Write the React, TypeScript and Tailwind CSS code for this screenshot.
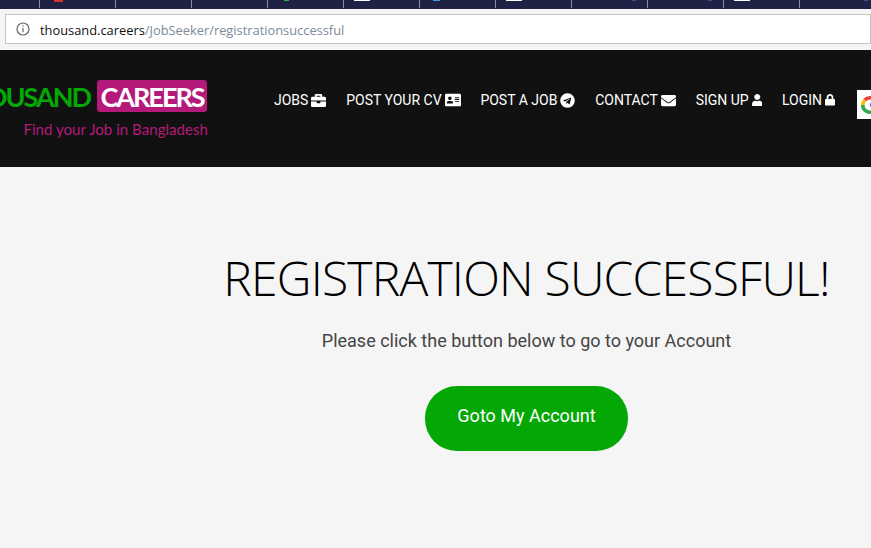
import { FaAddressCard, FaBriefcase, FaEnvelope, FaLock, FaTelegram, FaUser } from 'react-icons/fa';

const tabs = [
  'ml-[14px] w-[9px] h-[2px] bg-[#d9362b]',
  '',
  '',
  'ml-[16px] w-[5px] h-[1px] bg-[#25b34b]',
  'ml-[10px] w-[16px] h-[1px] bg-white',
  'ml-[13px] w-[7px] h-[1px] bg-[#2a9fd8]',
  'ml-[10px] w-[16px] h-[1px] bg-white',
  'ml-[60px] w-[4px] h-[1px] bg-[#4a4f8a]',
  'ml-[60px] w-[4px] h-[1px] bg-[#4a4f8a]',
  'ml-[10px] w-[16px] h-[1px] bg-white',
  'ml-[64px] w-[4px] h-[1px] bg-[#4a4f8a]',
];

const links = [
  { label: 'JOBS', icon: <FaBriefcase className="text-[15px]" /> },
  { label: 'POST YOUR CV', icon: <FaAddressCard className="text-[16px]" /> },
  { label: 'POST A JOB', icon: <FaTelegram className="text-[15px]" /> },
  { label: 'CONTACT', icon: <FaEnvelope className="text-[15px]" /> },
  { label: 'SIGN UP', icon: <FaUser className="h-[12px] w-[10.5px]" /> },
  { label: 'LOGIN', icon: <FaLock className="h-[11.5px] w-[10px]" /> },
];

function BrowserChrome() {
  return (
    <div className="h-[50px] bg-[#f5f5f6]">
      <div className="flex h-[9px] bg-[#1f2244] pl-[39px]">
        {tabs.map((mark, i) => (
          <div key={i} className="h-[8px] w-[76px] shrink-0 border-l border-[#8a8ca3]">
            {mark && <div className={mark} />}
          </div>
        ))}
      </div>
      <div className="ml-[5px] mt-[5px] flex h-[30px] items-center border border-[#c4c4c4] bg-white pl-[10px] font-['Open_Sans',sans-serif] text-[12.85px]">
        <svg width="14" height="14" viewBox="0 0 14 14" fill="none" stroke="#666" strokeWidth="1.2">
          <circle cx="7" cy="7" r="6" />
          <path d="M7 6v4.2M7 3.4v1.4" />
        </svg>
        <div className="ml-[10px] whitespace-nowrap pt-[3px]">
          <span className="text-[#111]">thousand.careers</span>
          <span className="text-[#7c8a99]">/JobSeeker/registrationsuccessful</span>
        </div>
      </div>
    </div>
  );
}

function Logo() {
  return (
    <div className="w-[208px] shrink-0 overflow-hidden pt-[30px] font-['Lato',sans-serif]">
      <div className="flex items-center justify-end whitespace-nowrap">
        <span className="text-[27px] font-bold leading-none tracking-[-2px] text-[#04a804]">THOUSAND</span>
        <span className="ml-[7px] mr-[1px] flex h-[32px] w-[110px] shrink-0 items-center justify-center rounded-[3px] bg-[#b5197a] text-[27px] font-bold leading-none tracking-[-2px] text-white">CAREERS</span>
      </div>
      <div className="mt-[7px] whitespace-nowrap text-right text-[15px] leading-[20px] tracking-[0.05px] text-[#b5197a]">Find your Job in Bangladesh</div>
    </div>
  );
}

function GoogleMark() {
  return (
    <svg width="18" height="18" viewBox="0 0 20 20" fill="none" strokeWidth="4">
      <path d="M2 10a8 8 0 0 1 2.2-5.5" stroke="#fbbc05" />
      <path d="M4.2 4.5A8 8 0 0 1 15.6 4.3" stroke="#ea4335" />
      <path d="M2 10a8 8 0 0 0 13.6 5.7" stroke="#34a853" />
      <path d="M10 10h8" stroke="#4285f4" />
    </svg>
  );
}

export default function App() {
  return (
    <div className="h-[548px] w-[871px] overflow-hidden bg-[#f5f5f5]">
      <BrowserChrome />
      <header className="flex h-[117px] items-start bg-[#111111] font-['Roboto',sans-serif] text-white">
        <Logo />
        <nav className="ml-[66px] mt-[40px] flex items-center gap-[19.8px] whitespace-nowrap text-[14px] leading-[20px]">
          {links.map((link) => (
            <a key={link.label} className="flex items-center gap-[3px]">
              {link.label}
              {link.icon}
            </a>
          ))}
        </nav>
        <div className="ml-[22px] mt-[40px] flex h-[29px] w-[14px] shrink-0 items-center overflow-hidden bg-white pl-[4px]">
          <div className="shrink-0">
            <GoogleMark />
          </div>
        </div>
      </header>
      <main className="ml-[182px] flex flex-col items-center pt-[83px]">
        <h1 className="whitespace-nowrap font-['Open_Sans',sans-serif] text-[48px] font-light leading-[56px] tracking-[-0.8px] text-black">REGISTRATION SUCCESSFUL!</h1>
        <p className="mt-[21px] font-['Roboto',sans-serif] text-[18px] text-[#444]">Please click the button below to go to your Account</p>
        <button className="mt-[32px] h-[65px] w-[203px] rounded-[32px] bg-[#04a804] pb-[7px] font-['Roboto',sans-serif] text-[18px] text-white">Goto My Account</button>
      </main>
    </div>
  );
}
